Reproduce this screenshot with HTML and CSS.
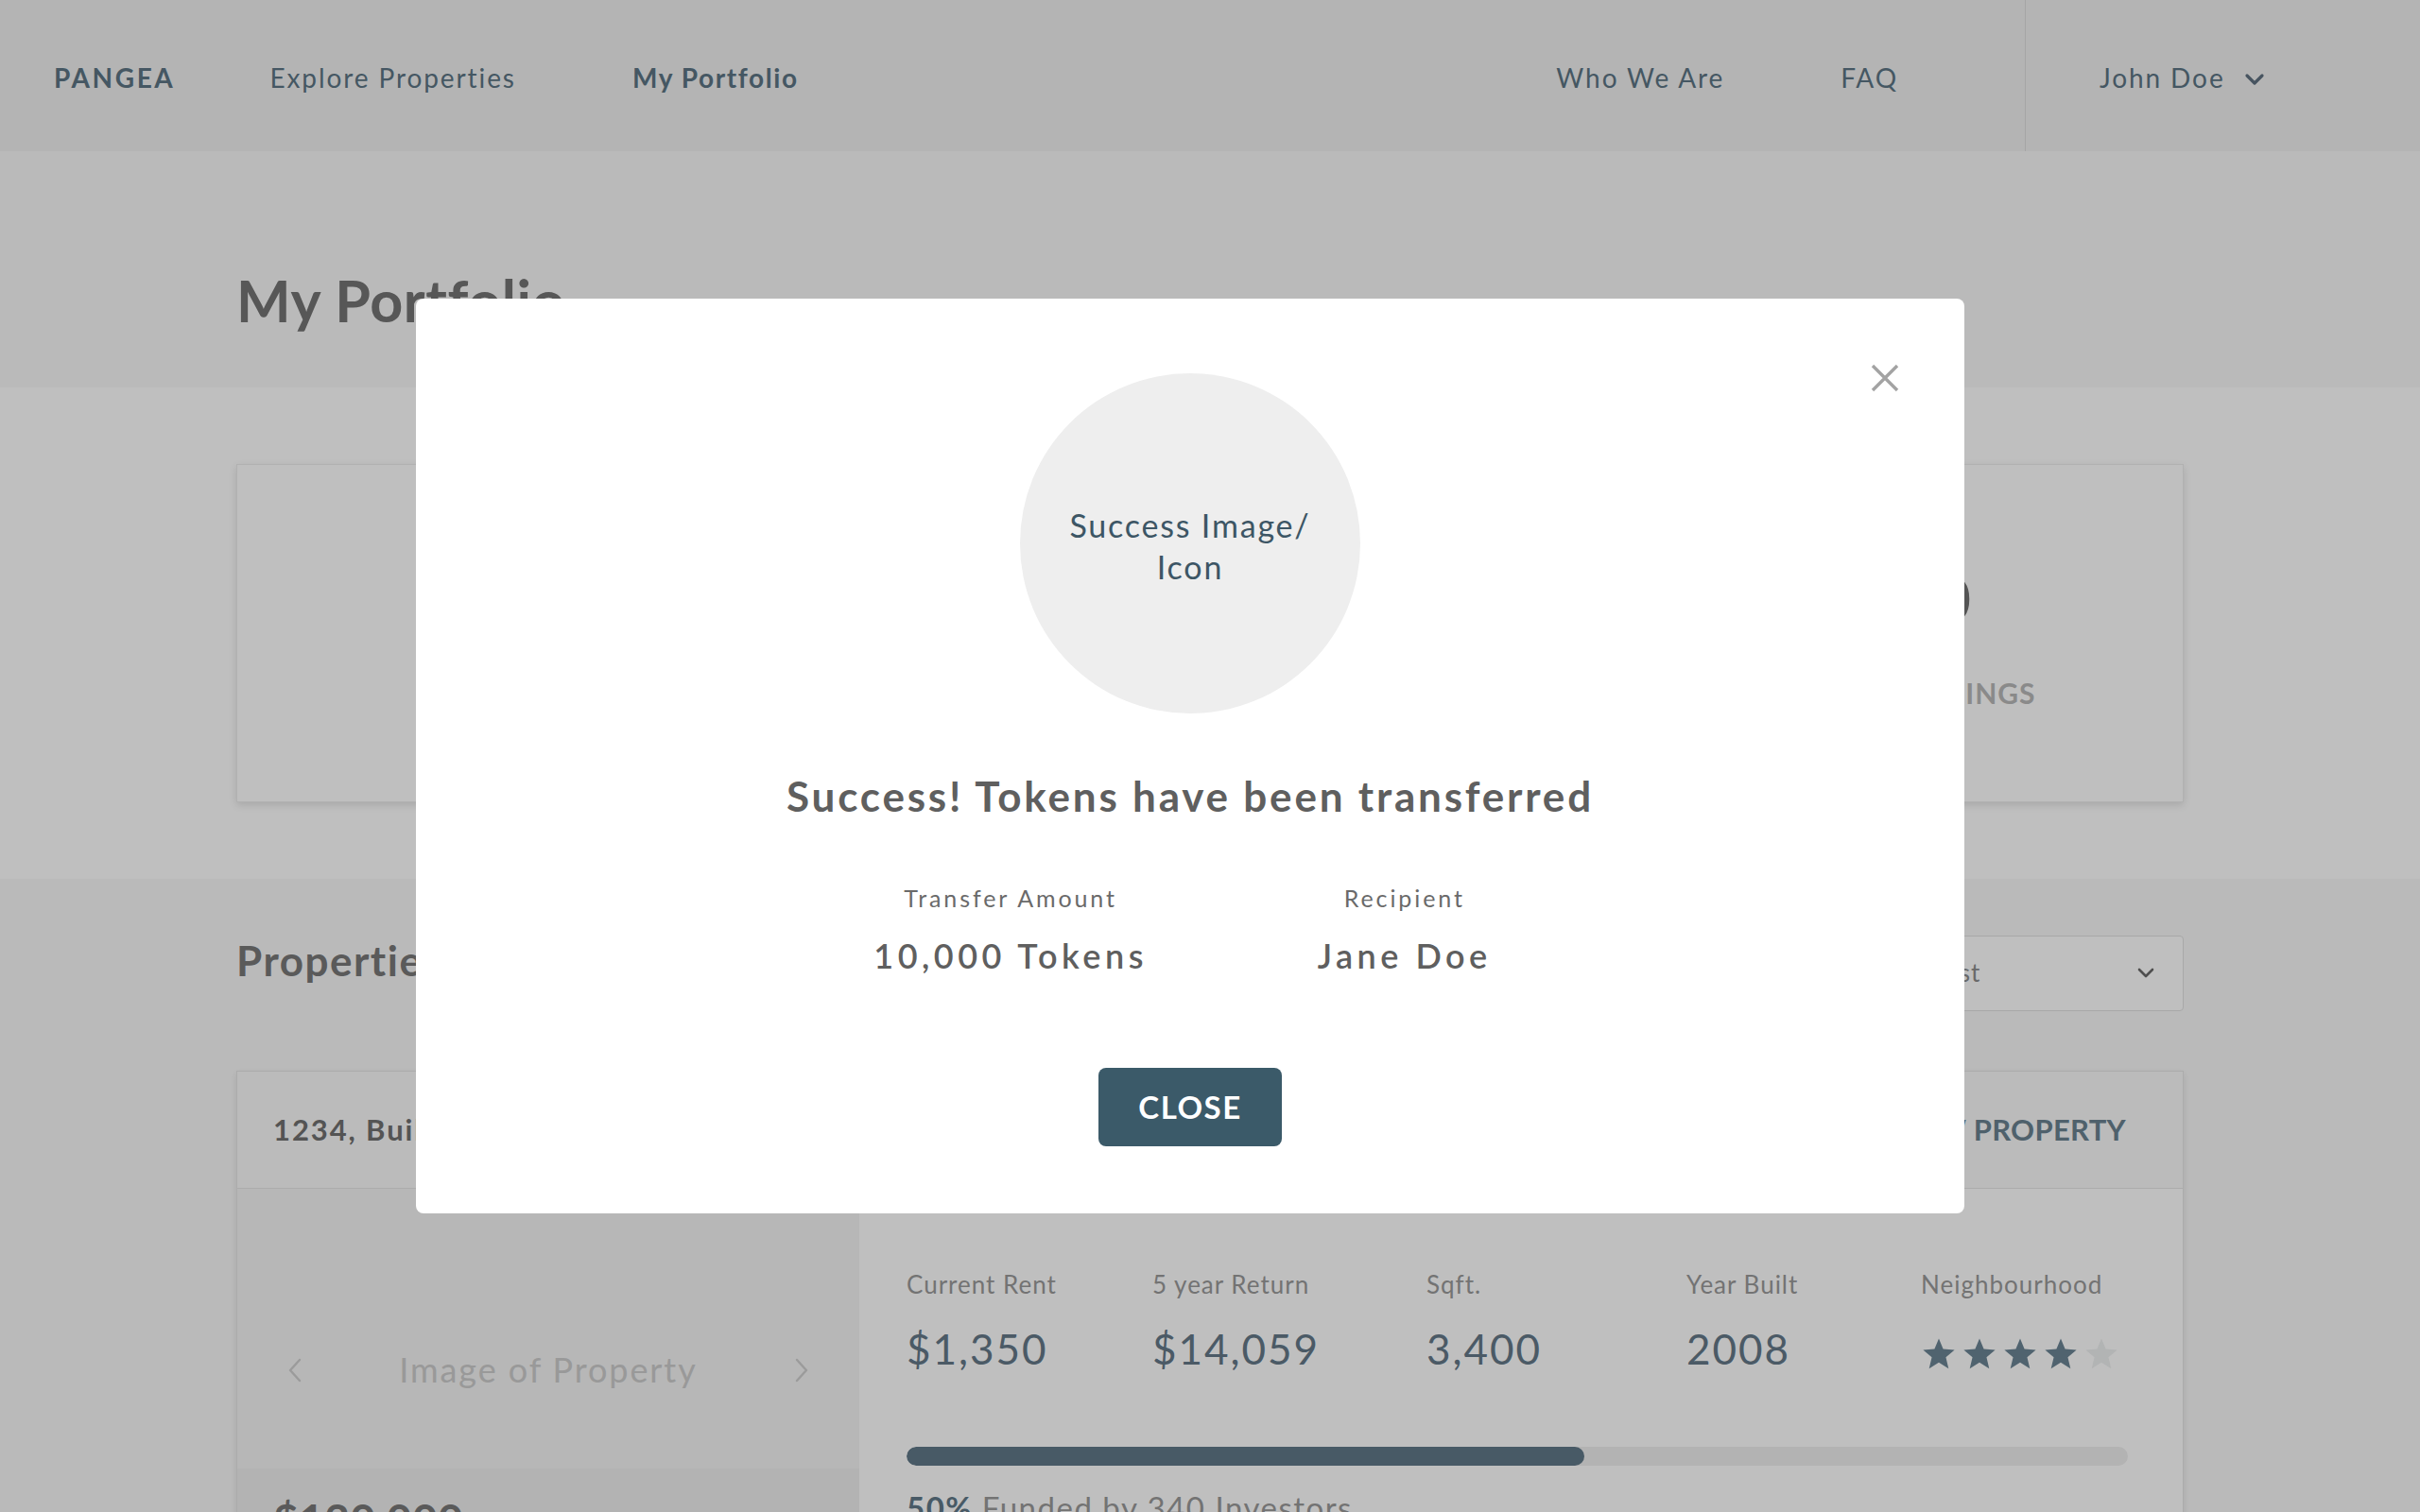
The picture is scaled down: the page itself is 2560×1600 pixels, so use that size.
FILE: index.html
```html
<!DOCTYPE html>
<html lang="en">
<head>
<meta charset="utf-8">
<title>Pangea - My Portfolio</title>
<link rel="stylesheet" href="styles.css">
</head>
<body>
<header class="nav">
  <div class="nav-left">
    <a class="logo">PANGEA</a>
    <a class="nav-link">Explore Properties</a>
    <a class="nav-link active">My Portfolio</a>
  </div>
  <div class="nav-right">
    <a class="nav-link">Who We Are</a>
    <a class="nav-link">FAQ</a>
  </div>
  <div class="user">
    <span class="nav-link">John Doe</span>
    <svg class="chev" width="22" height="14" viewBox="0 0 22 14"><path d="M3 3 L11 11 L19 3" fill="none" stroke="#5f7080" stroke-width="3.2" stroke-linecap="round" stroke-linejoin="round"/></svg>
  </div>
</header>

<section class="hero">
  <div class="container">
    <h1 class="page-title">My Portfolio</h1>
  </div>
</section>

<section class="summary">
  <div class="container">
    <div class="summary-card">
      <div class="stat">
        <div class="stat-value">$120,000</div>
        <div class="stat-label">Total Invested</div>
      </div>
      <div class="stat">
        <div class="stat-value">1</div>
        <div class="stat-label">Properties</div>
      </div>
      <div class="stat">
        <div class="stat-value">$10,000</div>
        <div class="stat-label">Your Token Holdings</div>
      </div>
    </div>
  </div>
</section>

<section class="props">
  <div class="container">
    <div class="props-head">
      <h2 class="section-title">Properties</h2>
      <div class="sort">
        <span>Sort: Newest</span>
        <svg width="18" height="12" viewBox="0 0 18 12"><path d="M2 2 L9 9 L16 2" fill="none" stroke="#6a6a6a" stroke-width="2.6" stroke-linecap="round" stroke-linejoin="round"/></svg>
      </div>
    </div>

    <div class="prop-card">
      <div class="prop-header">
        <span class="prop-address">1234, Building Street, Toronto, ON</span>
        <a class="prop-link">VIEW PROPERTY</a>
      </div>
      <div class="prop-body">
        <div class="prop-media">
          <div class="prop-image">
            <svg width="16" height="26" viewBox="0 0 16 26"><path d="M13 2 L3 13 L13 24" fill="none" stroke="#cfcfcf" stroke-width="2.4" stroke-linecap="round" stroke-linejoin="round"/></svg>
            <span>Image of Property</span>
            <svg width="16" height="26" viewBox="0 0 16 26"><path d="M3 2 L13 13 L3 24" fill="none" stroke="#cfcfcf" stroke-width="2.4" stroke-linecap="round" stroke-linejoin="round"/></svg>
          </div>
          <div class="prop-price">$120,000</div>
        </div>
        <div class="prop-info">
          <div class="facts">
            <div class="fact"><div class="fact-label">Current Rent</div><div class="fact-value">$1,350</div></div>
            <div class="fact"><div class="fact-label">5 year Return</div><div class="fact-value">$14,059</div></div>
            <div class="fact"><div class="fact-label">Sqft.</div><div class="fact-value">3,400</div></div>
            <div class="fact"><div class="fact-label">Year Built</div><div class="fact-value">2008</div></div>
            <div class="fact"><div class="fact-label">Neighbourhood</div>
              <div class="stars">
                <svg class="star on" viewBox="0 0 24 24"><path d="M12 1.5 L14.9 8.6 L22.5 9.2 L16.7 14.1 L18.5 21.6 L12 17.6 L5.5 21.6 L7.3 14.1 L1.5 9.2 L9.1 8.6 Z"/></svg>
                <svg class="star on" viewBox="0 0 24 24"><path d="M12 1.5 L14.9 8.6 L22.5 9.2 L16.7 14.1 L18.5 21.6 L12 17.6 L5.5 21.6 L7.3 14.1 L1.5 9.2 L9.1 8.6 Z"/></svg>
                <svg class="star on" viewBox="0 0 24 24"><path d="M12 1.5 L14.9 8.6 L22.5 9.2 L16.7 14.1 L18.5 21.6 L12 17.6 L5.5 21.6 L7.3 14.1 L1.5 9.2 L9.1 8.6 Z"/></svg>
                <svg class="star on" viewBox="0 0 24 24"><path d="M12 1.5 L14.9 8.6 L22.5 9.2 L16.7 14.1 L18.5 21.6 L12 17.6 L5.5 21.6 L7.3 14.1 L1.5 9.2 L9.1 8.6 Z"/></svg>
                <svg class="star off" viewBox="0 0 24 24"><path d="M12 1.5 L14.9 8.6 L22.5 9.2 L16.7 14.1 L18.5 21.6 L12 17.6 L5.5 21.6 L7.3 14.1 L1.5 9.2 L9.1 8.6 Z"/></svg>
              </div>
            </div>
          </div>
          <div class="progress"><div class="progress-fill" style="width:55.5%"></div></div>
          <div class="funded"><b>50%</b> Funded by 340 Investors</div>
        </div>
      </div>
    </div>
  </div>
</section>

<div class="overlay">
  <div class="modal">
    <button class="modal-x" aria-label="Close">
      <svg width="30" height="30" viewBox="0 0 30 30"><path d="M2 2 L28 28 M28 2 L2 28" stroke="#a3a3a3" stroke-width="3.4" stroke-linecap="butt"/></svg>
    </button>
    <div class="success-circle">Success Image/<br>Icon</div>
    <h3 class="modal-title">Success! Tokens have been transferred</h3>
    <div class="transfer">
      <div class="transfer-col">
        <div class="transfer-label">Transfer Amount</div>
        <div class="transfer-value">10,000 Tokens</div>
      </div>
      <div class="transfer-col">
        <div class="transfer-label">Recipient</div>
        <div class="transfer-value">Jane Doe</div>
      </div>
    </div>
    <button class="btn-close">CLOSE</button>
  </div>
</div>
</body>
</html>
```

FILE: styles.css
```css
* { box-sizing: border-box; }
html, body { margin: 0; padding: 0; }
body {
  font-family: "Lato", "Open Sans", "Liberation Sans", sans-serif;
  line-height: 1.2;
  background: #ffffff;
  color: #717171;
  height: 1600px;
  overflow: hidden;
}
a { text-decoration: none; color: inherit; }

.container { width: 2060px; margin: 0 auto; }

/* NAV */
.nav {
  display: flex;
  align-items: center;
  height: 160px;
  background: #f1f1f1;
  padding-left: 57px;
  padding-top: 6px;
  font-size: 28px;
  color: #5c7584;
}
.nav-left { display: flex; align-items: center; }
.logo { font-weight: 700; margin-right: 100px; letter-spacing: 2.6px; }
.nav-link { letter-spacing: 1.9px; }
.nav-left .nav-link + .nav-link { margin-left: 123px; }
.nav-link.active { font-weight: 700; letter-spacing: 1.6px; }
.nav-right { margin-left: auto; display: flex; gap: 123px; margin-right: 134px; }
.user {
  align-self: stretch;
  margin-top: -6px;
  width: 418px;
  border-left: 1px solid #dcdcdc;
  padding-left: 78px;
  padding-top: 6px;
  display: flex;
  align-items: center;
  gap: 20px;
}
.chev { margin-top: 2px; }

/* HERO */
.hero { height: 250px; background: #f9f9f9; padding-top: 122px; }
.page-title { margin: 0; font-size: 61px; line-height: 72px; font-weight: 700; color: #757575; letter-spacing: 0.6px; }

/* SUMMARY */
.summary { background: #ffffff; padding: 81px 0; }
.summary-card {
  height: 358px;
  border: 1px solid #ececec;
  background: #fff;
  box-shadow: 0 3px 8px rgba(0, 0, 0, 0.12);
  display: grid;
  grid-template-columns: 1fr 1fr 1fr;
  padding-top: 103px;
}
.stat { text-align: center; }
.stat-value { font-size: 64px; font-weight: 700; color: #717171; }
.stat-label {
  margin-top: 43px;
  font-size: 30px;
  font-weight: 700;
  color: #b8b8b8;
  text-transform: uppercase;
  letter-spacing: 1px;
}

/* PROPERTIES */
.props { background: #f9f9f9; padding-top: 60px; padding-bottom: 80px; }
.props-head { display: flex; justify-content: space-between; align-items: flex-start; }
.section-title { margin: 0; font-size: 44px; font-weight: 700; color: #787878; letter-spacing: 1.5px; }
.sort {
  width: 400px;
  height: 80px;
  background: #fff;
  border: 1px solid #e0e0e0;
  border-radius: 4px;
  display: flex;
  align-items: center;
  justify-content: space-between;
  padding: 0 30px 0 24px;
  font-size: 26px;
  color: #8d8d8d;
  letter-spacing: 1px;
}

.prop-card {
  margin-top: 63px;
  background: #fff;
  border: 1px solid #e6e6e6;
  box-shadow: 0 3px 8px rgba(0, 0, 0, 0.1);
}
.prop-header {
  height: 124px;
  background: #fafafa;
  border-bottom: 1px solid #e6e6e6;
  display: flex;
  align-items: center;
  justify-content: space-between;
  padding: 0 60px 0 38px;
  font-size: 31px;
  font-weight: 700;
}
.prop-address { color: #717171; letter-spacing: 1.9px; }
.prop-link { color: #6a8290; letter-spacing: 0.3px; }

.prop-body { display: grid; grid-template-columns: 658px 1fr; }
.prop-media { background: #efefef; }
.prop-image {
  height: 296px;
  background: #f4f4f4;
  display: flex;
  align-items: flex-start;
  justify-content: space-between;
  padding: 170px 53px 0;
  font-size: 36px;
  color: #cccccc;
  letter-spacing: 1.9px;
}
.prop-image span { line-height: 43px; }
.prop-image svg { margin-top: 9px; }
.prop-price { padding: 26px 38px; font-size: 46px; font-weight: 700; color: #787878; letter-spacing: 0.5px; }

.prop-info { padding: 86px 58px 0 50px; }
.facts { display: grid; grid-template-columns: 260px 290px 275px 248px auto; }
.fact-label { font-size: 26px; color: #9a9a9a; letter-spacing: 1px; }
.fact-value { margin-top: 26px; font-size: 44px; color: #647988; letter-spacing: 2px; }
.stars { margin-top: 39px; display: flex; gap: 5px; }
.star { width: 38px; height: 38px; }
.star.on { fill: #6b8595; }
.star.off { fill: #eef0f1; }

.progress { margin-top: 77px; height: 20px; border-radius: 10px; background: #efefef; overflow: hidden; }
.progress-fill { height: 100%; border-radius: 10px; background: #607888; }
.funded { margin-top: 25px; font-size: 33px; color: #9a9a9a; letter-spacing: 1.5px; }
.funded b { color: #607888; }

/* MODAL */
.overlay { position: fixed; inset: 0; background: rgba(0, 0, 0, 0.25); }
.modal {
  position: absolute;
  left: 440px;
  top: 316px;
  width: 1638px;
  height: 968px;
  background: #fff;
  border-radius: 8px;
  display: flex;
  flex-direction: column;
  align-items: center;
  padding-top: 79px;
}
.modal-x {
  position: absolute;
  top: 69px;
  right: 69px;
  width: 30px;
  height: 30px;
  padding: 0;
  border: 0;
  background: none;
}
.modal-x svg { display: block; }
.success-circle {
  width: 360px;
  height: 360px;
  border-radius: 50%;
  background: #eeeeee;
  display: flex;
  align-items: center;
  justify-content: center;
  text-align: center;
  font-size: 34px;
  line-height: 44px;
  color: #3d5665;
  letter-spacing: 1.8px;
  padding-top: 6px;
}
.modal-title { margin: 61px 0 0; font-size: 44px; font-weight: 700; color: #5f5f5f; letter-spacing: 2.8px; }
.transfer { display: flex; gap: 180px; margin-top: 66px; margin-right: 16px; }
.transfer-col { text-align: center; }
.transfer-label { font-size: 25px; letter-spacing: 2.9px; color: #6a6a6a; }
.transfer-value { margin-top: 25px; font-size: 36px; letter-spacing: 4.5px; color: #5f5f5f; font-weight: 600; }
.btn-close {
  margin-top: 97px;
  width: 194px;
  height: 83px;
  border: 0;
  border-radius: 8px;
  background: #3b5a69;
  color: #fff;
  font-family: inherit;
  font-size: 33px;
  font-weight: 700;
  letter-spacing: 1.5px;
}
```
